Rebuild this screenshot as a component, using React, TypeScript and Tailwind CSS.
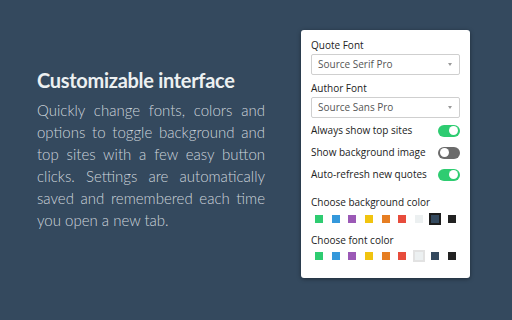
const BG = ["#2ecc71", "#3498db", "#9b59b6", "#f1c40f", "#e67e22", "#e74c3c", "#ecf0f1", "#34495e", "#222222"];

function Toggle({ on }: { on: boolean }) {
  return (
    <div className={`w-[22px] h-[12px] rounded-full flex items-center px-[2px] ${on ? "bg-[#2ecc71] justify-end" : "bg-[#6b6b6b] justify-start"}`}>
      <div className="w-[9px] h-[9px] rounded-full bg-white" />
    </div>
  );
}

function Select({ value }: { value: string }) {
  return (
    <div className="h-[21px] border border-[#cfcfcf] rounded-[2px] flex items-center justify-between pl-[6px] pr-[7px] text-[10px] text-[#555]">
      <span>{value}</span>
      <span className="w-0 h-0 border-x-[2.5px] border-x-transparent border-t-[3px] border-t-[#999]" />
    </div>
  );
}

function Swatches({ selected, light }: { selected: number; light?: boolean }) {
  return (
    <div className="flex items-center justify-between pl-[2px] pr-[2px] h-[14px]">
      {BG.map((c, i) => (
        <div
          key={c}
          className={`flex items-center justify-center w-[12px] h-[12px] ${i === selected ? (light ? "border-2 border-[#e2e2e2]" : "border-2 border-[#1d1d1d]") : ""}`}
        >
          <div className="w-[8px] h-[8px]" style={{ backgroundColor: c }} />
        </div>
      ))}
    </div>
  );
}

export default function App() {
  return (
    <div className="w-[512px] h-[320px] bg-[#34495e] relative overflow-hidden flex">
      <div className="w-[265px] pl-[37px] pt-[66px] shrink-0" style={{ fontFamily: "Lato, sans-serif" }}>
        <h1 className="text-[20px] font-bold text-[#ecf0f1] leading-[28px] tracking-[-0.3px]">Customizable interface</h1>
        <p className="mt-[5px] text-[15px] leading-[22px] text-[#cdd4db] text-justify font-light">
          Quickly change fonts, colors and options to toggle background and top sites with a few easy button clicks. Settings are automatically saved and remembered each time you open a new tab.
        </p>
      </div>
      <div className="ml-[36px] mt-[30px] w-[169px] h-[248px] bg-white rounded-[3px] shadow-[0_1px_4px_rgba(0,0,0,0.4)] px-[10px] pt-[9px] text-[#222] font-medium" style={{ fontFamily: "'Open Sans', sans-serif" }}>
        <div className="text-[10px] leading-[13px] mb-[2px]">Quote Font</div>
        <Select value="Source Serif Pro" />
        <div className="text-[10px] leading-[13px] mt-[7px] mb-[2px]">Author Font</div>
        <Select value="Source Sans Pro" />
        <div className="mt-[6px] flex flex-col gap-[9px]">
          <div className="flex items-center justify-between text-[10px] leading-[13px]"><span>Always show top sites</span><Toggle on /></div>
          <div className="flex items-center justify-between text-[10px] leading-[13px]"><span>Show background image</span><Toggle on={false} /></div>
          <div className="flex items-center justify-between text-[10px] leading-[13px]"><span>Auto-refresh new quotes</span><Toggle on /></div>
        </div>
        <div className="text-[10px] leading-[13px] mt-[15px] mb-[3px]">Choose background color</div>
        <Swatches selected={7} />
        <div className="text-[10px] leading-[13px] mt-[8px] mb-[2px]">Choose font color</div>
        <Swatches selected={6} light />
      </div>
    </div>
  );
}
